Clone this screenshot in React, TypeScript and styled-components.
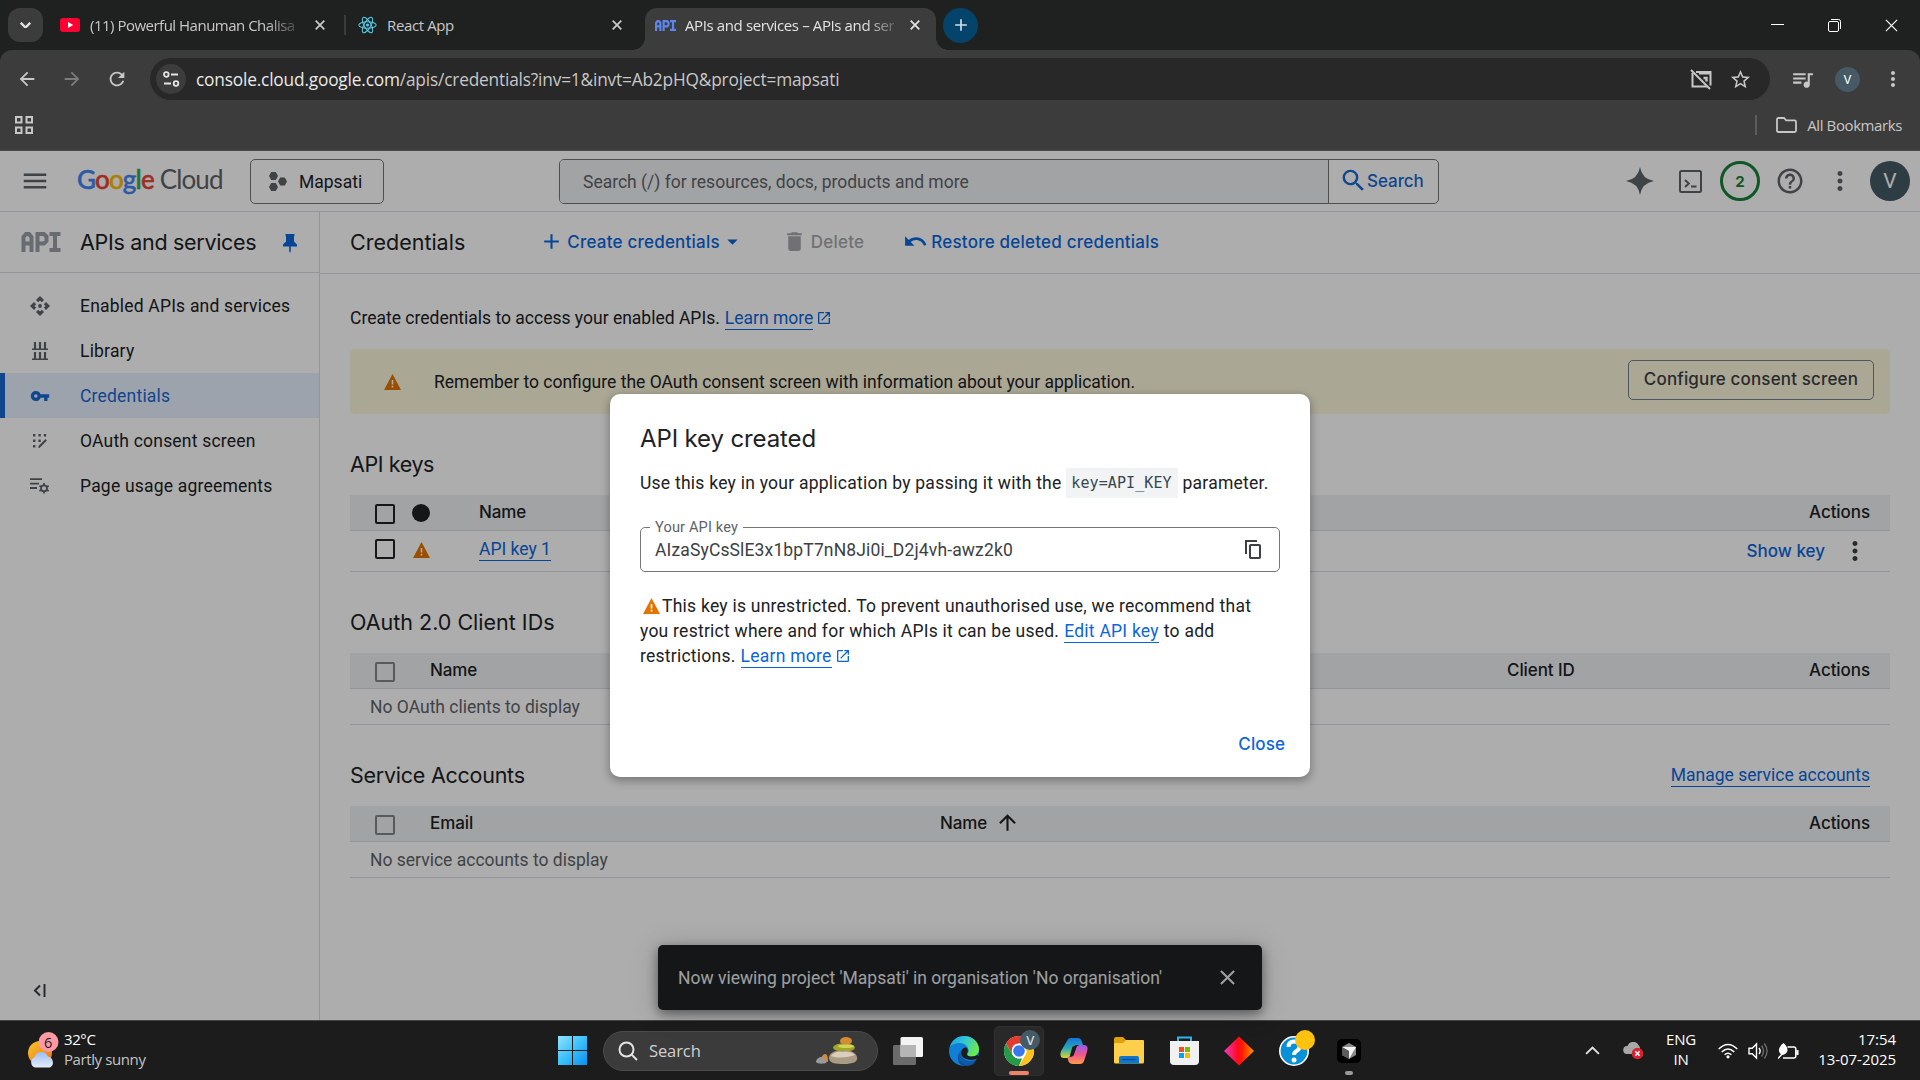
import React from "react";
import styled, { createGlobalStyle } from "styled-components";
import {
  MdMenu,
  MdHelpOutline,
  MdMoreVert,
  MdDelete,
  MdOpenInNew,
  MdArrowUpward,
  MdArrowDropDown,
  MdVpnKey,
  MdSearch,
  MdQueueMusic,
  MdStarBorder,
  MdClose,
  MdArrowBack,
  MdArrowForward,
  MdRefresh,
  MdAdd,
  MdUndo,
} from "react-icons/md";

const roboto = 'Roboto, "Liberation Sans", sans-serif';
const product = 'Inter, Roboto, sans-serif';
const segoe = '"Open Sans", "Noto Sans", sans-serif';
const blue = "#0b66de";

const Global = createGlobalStyle`
  * { box-sizing: border-box; }
  body { margin: 0; overflow: hidden; background: #1c1c1c; }
  button { font: inherit; background: none; border: 0; padding: 0; margin: 0; }
  svg { display: block; flex: none; }
`;

const Screen = styled.div`
  width: 1920px;
  height: 1080px;
  display: flex;
  flex-direction: column;
  overflow: hidden;
  font-family: ${roboto};
  font-size: 17.5px;
  white-space: nowrap;
`;

/* ---------- browser frame ---------- */

const TabStrip = styled.div`
  height: 50px;
  background: #1f2120;
  display: flex;
  align-items: center;
  font-family: ${segoe};
  font-size: 15px;
  letter-spacing: -0.38px;
  color: #c8c8c8;
`;

const TabSearch = styled.button`
  width: 35px;
  height: 34px;
  margin-left: 8px;
  border-radius: 12px;
  background: #3c3c3c;
  display: grid;
  place-items: center;
`;

const Tab = styled.div<{ $w: number; $active?: boolean; $pl: number; $pr: number }>`
  position: relative;
  width: ${(p) => p.$w}px;
  height: 42px;
  align-self: flex-end;
  padding: 0 ${(p) => p.$pr}px 8px ${(p) => p.$pl}px;
  display: flex;
  align-items: center;
  border-radius: 12px 12px 0 0;
  background: ${(p) => (p.$active ? "#3c3c3c" : "transparent")};
  color: ${(p) => (p.$active ? "#e3e3e3" : "#c8c8c8")};
  ${(p) =>
    p.$active &&
    `
    &::before, &::after {
      content: "";
      position: absolute;
      bottom: 0;
      width: 12px;
      height: 12px;
    }
    &::before { left: -12px; background: radial-gradient(circle at 0 0, transparent 11.5px, #3c3c3c 12px); }
    &::after { right: -12px; background: radial-gradient(circle at 100% 0, transparent 11.5px, #3c3c3c 12px); }
  `}
`;

const TabTitle = styled.span<{ $fade?: boolean; $ml: number; $ls?: number }>`
  margin-left: ${(p) => p.$ml}px;
  letter-spacing: ${(p) => p.$ls ?? -0.38}px;
  ${(p) => p.$fade && "mask-image: linear-gradient(90deg, #000 86%, rgba(0,0,0,.25));"}
`;

const Push = styled.div`
  flex: 1;
`;

const VRule = styled.i<{ $ml?: number }>`
  width: 2px;
  height: 20px;
  margin-left: ${(p) => p.$ml ?? 0}px;
  background: ${(p) => (p.$ml ? "#5c5c5c" : "#3c3c3c")};
`;

const NewTab = styled.button`
  width: 35px;
  height: 35px;
  margin-left: 7px;
  border-radius: 50%;
  background: #04446a;
  color: #d5dde2;
  display: grid;
  place-items: center;
`;

const WindowControls = styled.div`
  display: flex;
  align-items: center;
  gap: 44px;
  margin-right: 22px;
`;

const Chrome = styled.div`
  height: 101px;
  background: #1f2120;
`;

const ChromeBody = styled.div`
  height: 101px;
  border-radius: 12px 12px 0 0;
  background: #3c3c3c;
  border-bottom: 1px solid #4a4a4a;
`;

const Toolbar = styled.div`
  height: 58px;
  display: flex;
  align-items: center;
  color: #c7c7c7;
  padding-left: 16px;
`;

const NavIcon = styled.span<{ $dim?: boolean; $mr: number }>`
  margin-right: ${(p) => p.$mr}px;
  color: ${(p) => (p.$dim ? "#7c7c7c" : "#c7c7c7")};
`;

const Omnibox = styled.div`
  width: 1620px;
  height: 42px;
  border-radius: 21px;
  background: #282828;
  display: flex;
  align-items: center;
  padding: 0 18px 0 6px;
  font-family: ${segoe};
  font-size: 17.3px;
  color: #c7c7c7;
`;

const SiteInfo = styled.span`
  width: 30px;
  height: 30px;
  border-radius: 50%;
  background: #3c3c3c;
  display: grid;
  place-items: center;
  margin-right: 10px;
`;

const Url = styled.span`
  flex: 1;
  letter-spacing: -0.18px;
  b {
    font-weight: 400;
    color: #e8e8e8;
  }
`;

const Avatar = styled.span<{ $d: number; $bg: string; $fs: number }>`
  width: ${(p) => p.$d}px;
  height: ${(p) => p.$d}px;
  border-radius: 50%;
  background: ${(p) => p.$bg};
  color: #fff;
  font-family: ${roboto};
  font-size: ${(p) => p.$fs}px;
  display: grid;
  place-items: center;
  flex: none;
`;

const Bookmarks = styled.div`
  height: 42px;
  padding: 2px 18px 10px 15px;
  display: flex;
  align-items: center;
  font-family: ${segoe};
  font-size: 15px;
  letter-spacing: -0.4px;
  color: #c7c7c7;
`;

const FolderLabel = styled.span`
  margin-left: 10px;
  padding-bottom: 1px;
`;

/* ---------- console page ---------- */

const Page = styled.div`
  position: relative;
  height: 869px;
  background: #fff;
  color: #202124;
  display: flex;
  flex-direction: column;
`;

const Header = styled.header`
  height: 61px;
  border-bottom: 1px solid #dadce0;
  display: flex;
  align-items: center;
  padding-left: 20px;
  color: #5f6368;
`;

const Logo = styled.span`
  margin-left: 27px;
  width: 147px;
  font-family: Lato, ${product};
  font-size: 26px;
  letter-spacing: -0.85px;
  color: #5f6368;
  padding-bottom: 4px;
`;

const Letter = styled.span<{ $c: string }>`
  color: ${(p) => p.$c};
  font-weight: 500;
  -webkit-text-stroke: 0.5px ${(p) => p.$c};
`;

const ProjectPicker = styled.button`
  width: 134px;
  height: 45px;
  margin-left: 26px;
  border: 1px solid #747775;
  border-radius: 5px;
  display: flex;
  align-items: center;
  gap: 12px;
  padding: 1px 0 0 18px;
  color: #202124;
`;

const SearchBox = styled.div`
  width: 880px;
  height: 45px;
  margin-left: 175px;
  border: 1px solid #747775;
  border-radius: 5px;
  display: flex;
  overflow: hidden;
`;

const SearchInput = styled.div`
  width: 769px;
  background: #eff1f3;
  border-right: 1px solid #747775;
  padding: 1px 0 0 23px;
  display: flex;
  align-items: center;
  color: #5f6368;
`;

const SearchButton = styled.button`
  flex: 1;
  display: flex;
  align-items: center;
  padding: 0 0 1px 10px;
  color: #1967d2;
  font-family: ${product};
  font-weight: 500;
  font-size: 17px;
  letter-spacing: -0.05px;
`;

const SearchLabel = styled.span`
  margin-left: -1px;
`;

const HeaderTools = styled.div`
  flex: 1;
  display: flex;
  align-items: center;
  justify-content: flex-end;
  padding-right: 10px;
`;

const Tool = styled.span<{ $w: number }>`
  width: ${(p) => p.$w}px;
  display: grid;
  place-items: center;
`;

const Notice = styled.span`
  width: 40px;
  height: 40px;
  border: 3px solid #188038;
  border-radius: 50%;
  color: #188038;
  font-family: ${product};
  font-size: 15px;
  font-weight: 700;
  display: grid;
  place-items: center;
`;

const Columns = styled.div`
  flex: 1;
  display: flex;
`;

const Sidebar = styled.aside`
  width: 320px;
  border-right: 1px solid #dadce0;
  display: flex;
  flex-direction: column;
`;

const SideHead = styled.div`
  height: 61px;
  border-bottom: 1px solid #dadce0;
  display: flex;
  align-items: center;
  padding: 0 22px 0 21px;
`;

const Title = styled.h1<{ $ls?: number; $fs?: number }>`
  margin: 0;
  font-family: ${product};
  font-weight: 400;
  font-size: ${(p) => p.$fs ?? 21.5}px;
  line-height: 28px;
  letter-spacing: ${(p) => p.$ls ?? 0}px;
`;

const SideTitle = styled(Title)`
  flex: 1;
  margin-left: 19px;
`;

const NavList = styled.nav`
  flex: 1;
  padding-top: 10px;
`;

const NavItem = styled.div<{ $active?: boolean }>`
  height: 45px;
  display: flex;
  align-items: center;
  padding-left: ${(p) => (p.$active ? 25 : 30)}px;
  border-left: ${(p) => (p.$active ? "5px solid #1967d2" : "0")};
  background: ${(p) => (p.$active ? "#e8f0fe" : "none")};
  color: ${(p) => (p.$active ? "#1967d2" : "#202124")};
  letter-spacing: 0.2px;
`;

const NavGlyph = styled.span<{ $active?: boolean }>`
  width: 20px;
  margin-right: 30px;
  display: grid;
  place-items: center;
  color: ${(p) => (p.$active ? "#1967d2" : "#5f6368")};
`;

const Collapse = styled.button`
  width: 14px;
  margin: 0 0 23px 33px;
`;

const Main = styled.main`
  flex: 1;
`;

const ActionBar = styled.div`
  height: 62px;
  border-bottom: 1px solid #dadce0;
  display: flex;
  align-items: center;
  padding: 0 0 2px 30px;
`;

const ActionButton = styled.button<{ $ml: number; $off?: boolean }>`
  margin-left: ${(p) => p.$ml}px;
  display: flex;
  align-items: center;
  color: ${(p) => (p.$off ? "#a5a7a9" : blue)};
  font-family: ${product};
  font-size: 17px;
  font-weight: 500;
  letter-spacing: 0.22px;
`;

const Gap = styled.i<{ $w: number }>`
  width: ${(p) => p.$w}px;
  flex: none;
`;

const Content = styled.div`
  padding: 30px 30px 0;
`;

const Intro = styled.p`
  margin: 0 0 18px;
  height: 27px;
  display: flex;
  align-items: center;
`;

const Link = styled.a<{ $ml?: number; $mb?: number }>`
  color: ${blue};
  border-bottom: 1.5px solid ${blue};
  line-height: 20px;
  height: 22px;
  margin: 2px 0 ${(p) => p.$mb ?? 0}px ${(p) => p.$ml ?? 0}px;
`;

const Banner = styled.div`
  height: 65px;
  border-radius: 5px;
  background: #fbf6dc;
  display: flex;
  align-items: center;
  padding: 0 16px 0 34px;
`;

const BannerText = styled.span`
  flex: 1;
  margin-left: 33px;
`;

const OutlineButton = styled.button`
  width: 246px;
  height: 40px;
  margin-bottom: 3px;
  padding-bottom: 2px;
  border: 1px solid #747f8d;
  border-radius: 5px;
  font-family: ${product};
  font-weight: 500;
  font-size: 17px;
  letter-spacing: 0.15px;
  color: #3c4043;
`;

const SectionHead = styled.div`
  height: 81px;
  padding: 0 20px 17px 0;
  display: flex;
  align-items: flex-end;
  justify-content: space-between;
`;

const HeadRow = styled.div`
  height: 36px;
  background: #eff1f3;
  border-bottom: 1px solid #dadce0;
  display: flex;
  align-items: center;
  padding: 0 20px 2px 25px;
  font-family: ${product};
  font-weight: 500;
  font-size: 17px;
  letter-spacing: -0.08px;
`;

const Row = styled.div<{ $h: number }>`
  height: ${(p) => p.$h}px;
  border-bottom: 1px solid #dadce0;
  display: flex;
  align-items: center;
  padding: 0 20px 4px 25px;
`;

const EmptyRow = styled(Row)`
  padding: 0 0 0 20px;
  color: #5f6368;
`;

const Check = styled.span<{ $soft?: boolean }>`
  width: 20px;
  height: 20px;
  border: 2px solid ${(p) => (p.$soft ? "#80868b" : "#202124")};
  border-radius: 2px;
`;

const Cell = styled.span<{ $w?: number; $pt?: number }>`
  ${(p) => (p.$w ? `width: ${p.$w}px;` : "flex: 1;")}
  padding-top: ${(p) => p.$pt ?? 0}px;
  display: flex;
  align-items: center;
`;

const Dot = styled.i`
  width: 18px;
  height: 18px;
  border-radius: 50%;
  background: #202124;
`;

const ShowKey = styled.span`
  font-family: ${product};
  font-weight: 500;
  font-size: 17px;
  color: ${blue};
  margin-right: 15px;
  padding-top: 4px;
`;

/* ---------- overlays ---------- */

const Toast = styled.div`
  position: absolute;
  left: 658px;
  top: 794px;
  width: 604px;
  height: 65px;
  border-radius: 5px;
  background: #202124;
  color: #e8eaed;
  display: flex;
  align-items: center;
  justify-content: space-between;
  padding: 0 22px 0 20px;
  box-shadow: 0 4px 12px rgba(0, 0, 0, 0.45), 0 2px 30px rgba(0, 0, 0, 0.15);
`;

const Scrim = styled.div`
  position: absolute;
  inset: 0;
  background: rgba(0, 0, 0, 0.32);
`;

const Dialog = styled.section`
  position: absolute;
  left: 610px;
  top: 243px;
  width: 700px;
  height: 383px;
  padding: 31px 25px 0 30px;
  border-radius: 10px;
  background: #fff;
  display: flex;
  flex-direction: column;
  letter-spacing: 0.245px;
  box-shadow: 0 3px 8px 1px rgba(0, 0, 0, 0.3);
`;

const DialogText = styled.p`
  margin: 15px 0 0;
  height: 30px;
  display: flex;
  align-items: center;
`;

const Code = styled.code`
  width: 112px;
  height: 30px;
  margin: 0 5px 0 4px;
  background: #f1f3f4;
  display: grid;
  place-items: center;
  font-family: "DejaVu Sans Mono", monospace;
  font-size: 15px;
  letter-spacing: 0.1px;
  color: #37474f;
`;

const Field = styled.div`
  position: relative;
  width: 640px;
  height: 45px;
  margin-top: 29px;
  border: 1px solid #747775;
  border-radius: 5px;
  padding: 0 18px 0 14px;
  display: flex;
  align-items: center;
  justify-content: space-between;
  color: #3c4043;
  letter-spacing: 0.14px;
`;

const FieldLabel = styled.span`
  position: absolute;
  left: 9px;
  top: -11px;
  padding: 0 5px;
  background: #fff;
  font-size: 14.6px;
  line-height: 20px;
  color: #5f6368;
`;

const Warning = styled.div`
  margin-top: 21px;
`;

const WarningLine = styled.div`
  height: 25px;
  display: flex;
  align-items: center;
`;

const DialogClose = styled.button`
  align-self: flex-end;
  margin-top: 64px;
  height: 24px;
  font-family: ${product};
  font-weight: 500;
  font-size: 17px;
  letter-spacing: 0.1px;
  color: ${blue};
`;

/* ---------- taskbar ---------- */

const Taskbar = styled.footer`
  height: 60px;
  background: #1c1c1c;
  border-top: 1px solid #434545;
  display: flex;
  align-items: center;
  font-family: ${segoe};
  font-size: 15px;
  letter-spacing: -0.4px;
  line-height: 20px;
  color: #fff;
`;

const Weather = styled.div`
  width: 558px;
  padding-left: 27px;
  display: flex;
  gap: 5px;
  align-items: center;
`;

const WeatherText = styled.div`
  padding-bottom: 4px;
`;

const Muted = styled.div`
  color: #c4c4c4;
`;

const SearchPill = styled.div`
  width: 275px;
  height: 40px;
  margin: 0 15px 0 16px;
  border-radius: 20px;
  background: #3b3b3b;
  border: 1px solid #4b4b4b;
  display: flex;
  align-items: center;
  padding: 0 19px 0 14px;
  font-size: 16.5px;
  letter-spacing: -0.1px;
  color: #d0d0d0;
`;

const PillText = styled.span`
  flex: 1;
  margin-left: 11px;
`;

const AppSlot = styled.span<{ $active?: boolean; $mark?: string }>`
  position: relative;
  width: 50px;
  height: 50px;
  margin-right: 5px;
  border-radius: 5px;
  display: grid;
  place-items: center;
  background: ${(p) => (p.$active ? "#292929" : "none")};
  border: 1px solid ${(p) => (p.$active ? "#303030" : "transparent")};
  ${(p) =>
    p.$mark &&
    `&::after {
      content: "";
      position: absolute;
      bottom: 0;
      left: ${p.$active ? 14 : 20}px;
      width: ${p.$active ? 20 : 8}px;
      height: 4px;
      border-radius: 2px;
      background: ${p.$mark};
    }`}
`;

const Tray = styled.div`
  flex: 1;
  display: flex;
  align-items: center;
  justify-content: flex-end;
  padding-right: 24px;
`;

const TrayText = styled.div<{ $align: string; $w: number; $ls?: number }>`
  width: ${(p) => p.$w}px;
  text-align: ${(p) => p.$align};
  letter-spacing: ${(p) => p.$ls ?? -0.2}px;
  padding-bottom: 4px;
`;

/* ---------- drawings ---------- */

const CloseX = ({ s = 10, w = 1.8, c = "currentColor" }) => (
  <svg width={s} height={s} viewBox="0 0 10 10">
    <path d="M.7.7l8.6 8.6M9.3.7L.7 9.3" stroke={c} strokeWidth={(w * 10) / s} fill="none" />
  </svg>
);

const Warn = ({ w = 17, h = 16 }) => (
  <svg width={w} height={h} viewBox="0 0 17 16">
    <path d="M8.5 0L17 16H0z" fill="#e37400" />
    <path d="M8.5 6v4.4M8.5 11.8v1.8" stroke="#fff" strokeWidth="1.6" />
  </svg>
);

const YouTube = () => (
  <svg width="20" height="14" viewBox="0 0 20 14">
    <rect width="20" height="14" rx="3" fill="#ff0033" />
    <path d="M8 4l5.2 3L8 10z" fill="#fff" />
  </svg>
);

const ReactMark = () => (
  <svg width="19" height="18" viewBox="-12 -11 24 22" fill="none" stroke="#5ac8e4" strokeWidth="1.3">
    <circle r="2" fill="#5ac8e4" stroke="none" />
    <ellipse rx="11" ry="4.2" />
    <ellipse rx="11" ry="4.2" transform="rotate(60)" />
    <ellipse rx="11" ry="4.2" transform="rotate(120)" />
  </svg>
);

const ApiMark = ({ w, h, c }: { w: number; h: number; c: string }) => (
  <svg width={w} height={h} viewBox="0 0 39 20" fill="none" stroke={c} strokeWidth="4">
    <path d="M2 20V5l2.500-3h3L10 5v15M2 11.500h8M16 20V2h6.500l2.500 2.500v4.500l-2.500 2.500H16M28 2h11M28 18h11M33.500 2v16" />
  </svg>
);

const Tune = () => (
  <svg width="17" height="16" viewBox="0 0 17 16" fill="none" stroke="#e3e3e3" strokeWidth="1.8">
    <circle cx="3.300" cy="3.500" r="2.300" />
    <path d="M8 3.500h7M1 12.500h7" />
    <circle cx="13" cy="12.500" r="2.300" />
  </svg>
);

const TabOff = () => (
  <svg width="22" height="21" viewBox="0 0 22 21" fill="none" stroke="#c7c7c7" strokeWidth="2">
    <path d="M2.500 4v13.500H17M6 3h14.500v13.500" />
    <path d="M9 4.300h11.500M13.500 9h3v3.500" strokeWidth="2.400" />
    <path d="M1 1l19 19" />
  </svg>
);

const Apps = () => (
  <svg width="18" height="18" viewBox="0 0 18 18" fill="none" stroke="#c7c7c7" strokeWidth="2">
    <path d="M1 1h5.500v5.500H1zM11.500 1H17v5.500h-5.500zM1 11.500h5.500V17H1zM11.500 11.500H17V17h-5.500z" />
  </svg>
);

const Folder = () => (
  <svg width="21" height="16" viewBox="0 0 21 16" fill="none" stroke="#c7c7c7" strokeWidth="1.800">
    <path d="M1 13.500v-11Q1 1 2.500 1H8l2.200 2.300h8.300q1.500 0 1.500 1.500v8.700q0 1.500-1.500 1.500h-16Q1 15 1 13.500z" />
  </svg>
);

const Hexes = () => (
  <svg width="18" height="19" viewBox="0 0 18 19" fill="#5f6368">
    <path d="M2.200 0h4.600L9 4 6.800 8H2.200L0 4zM2.200 11h4.600L9 15l-2.200 4H2.200L0 15zM11.200 5.500h4.600l2.200 4-2.200 4h-4.600L9 9.500z" />
  </svg>
);

const Sparkle = () => (
  <svg width="28" height="28" viewBox="0 0 28 28" fill="#5f6368">
    <path d="M14 0q2 12 14 14-12 2-14 14Q12 16 0 14 12 12 14 0z" />
  </svg>
);

const Terminal = () => (
  <svg width="23" height="23" viewBox="0 0 23 23" fill="none" stroke="#5f6368" strokeWidth="2">
    <rect x="1" y="1" width="21" height="21" rx="1.500" />
    <path d="M6 10l3.800 3.500L6 17M12 16.500h5.500" />
  </svg>
);

const Pin = () => (
  <svg width="14" height="19" viewBox="0 0 14 19" fill={blue}>
    <path d="M2.500 0h9v1.500L11 2v5.500l3 3V12.500H7.800V17L7 19l-.8-2v-4.500H0v-2l3-3V2l-.5-.5z" />
  </svg>
);

const PinSlot = styled.span`
  padding-top: 3px;
`;

const Copy = () => (
  <svg width="16" height="19" viewBox="0 0 16 19" fill="none" stroke="#3c4043" strokeWidth="2">
    <path d="M1 14V1h11" />
    <rect x="5" y="5" width="10" height="13" rx=".8" />
  </svg>
);

const ApiNav = () => (
  <svg width="20" height="20" viewBox="0 0 20 20" fill="currentColor">
    <circle cx="10" cy="10" r="1.900" />
    <path d="M10 0l4 4-2.200 2.200L10 4.500 8.200 6.200 6 4zM10 20l4-4-2.200-2.200L10 15.500l-1.800-1.700L6 16zM0 10l4-4 2.200 2.200L4.500 10l1.700 1.800L4 14zM20 10l-4-4-2.200 2.200 1.700 1.800-1.700 1.800L16 14z" />
  </svg>
);

const Library = () => (
  <svg width="16" height="18" viewBox="0 0 16 18" fill="none" stroke="currentColor">
    <path d="M3 0v7M8 0v7M13 0v7M3 10v7M8 10v7M13 10v7" strokeWidth="2.200" />
    <path d="M0 7.300h16M0 17.300h16" strokeWidth="1.400" />
  </svg>
);

const Consent = () => (
  <svg width="14" height="14" viewBox="0 0 14 14" fill="currentColor">
    <path d="M0 0h2.400v2.400H0zM5.400 0h2.400v2.400H5.400zM10.800 0h2.400v2.400h-2.400zM0 5.500h2.400v2.400H0zM5.400 5.500h2.400v2.400H5.400zM0 11h2.400v2.400H0zM5.500 12l7-7 1.400 1.400L6.500 14h-1z" />
  </svg>
);

const Agreements = () => (
  <svg width="20" height="16" viewBox="0 0 20 16" fill="none" stroke="currentColor" strokeWidth="1.800">
    <path d="M0 1.200h12M0 5.600h9M0 10h7" />
    <circle cx="14" cy="10.300" r="3" />
    <path d="M14 5v2M14 13.600v2M9.400 7.700l1.700 1M17 12l1.700 1M9.400 13l1.700-1M17 8.700l1.700-1" />
  </svg>
);

const CollapseMark = () => (
  <svg width="13" height="13" viewBox="0 0 13 13" fill="none" stroke="#3c4043" strokeWidth="2">
    <path d="M7 1.500L2 6.500l5 5M11.500 0v13" />
  </svg>
);

const WeatherIcon = () => (
  <svg width="32" height="38" viewBox="0 0 32 38">
    <defs>
      <linearGradient id="sun" x1="0" y1="0" x2="1" y2="1">
        <stop offset="0" stopColor="#f8c62c" />
        <stop offset="1" stopColor="#ef6c12" />
      </linearGradient>
      <linearGradient id="cloud" x1="0" y1="0" x2="0" y2="1">
        <stop offset="0" stopColor="#9dbcf3" />
        <stop offset="1" stopColor="#e4eefc" />
      </linearGradient>
    </defs>
    <circle cx="13" cy="21" r="12" fill="url(#sun)" />
    <path d="M8 35.500a5.500 5.500 0 01-.5-10.300 7 7 0 0113.300-.8A6 6 0 0123 35.500z" fill="url(#cloud)" />
    <circle cx="21.500" cy="10" r="10" fill="#ff99a4" />
    <text x="21" y="15.500" textAnchor="middle" fontSize="14.500" fill="#1c1c1c">
      6
    </text>
  </svg>
);

const StartIcon = () => (
  <svg width="29" height="29" viewBox="0 0 29 29">
    <defs>
      <linearGradient id="win" x1="0" y1="0" x2="1" y2="1">
        <stop offset="0" stopColor="#8fe3ff" />
        <stop offset=".5" stopColor="#3cc1fb" />
        <stop offset="1" stopColor="#0a8fee" />
      </linearGradient>
    </defs>
    <path d="M0 0h14v14H0zM15 0h14v14H15zM0 15h14v14H0zM15 15h14v14H15z" fill="url(#win)" />
  </svg>
);

const Stones = () => (
  <svg width="42" height="27" viewBox="0 0 42 27">
    <ellipse cx="30" cy="4" rx="6" ry="4" fill="#d98a35" />
    <ellipse cx="28" cy="10.500" rx="11" ry="4.300" fill="#a3a526" />
    <ellipse cx="30" cy="9.300" rx="8" ry="1.800" fill="#d2d55c" />
    <path d="M13 21c0-5 6-8 12-7 4-1 14-1 16 6 1 5-4 7-13 7s-15-1-15-6z" fill="#a99b84" />
    <path d="M15 19c2-3 6-5 11-4 5-1 11 0 13 3-6 2-16 4-24 1z" fill="#d9cfba" />
    <path d="M4 24c1-4 3-7 5-7 3 0 3 5 3 8z" fill="#d48a3c" />
    <path d="M0 25c0-3 3-5 6-5 3 1 5 4 4 6-2 1-9 1-10-1z" fill="#9a9a9a" />
  </svg>
);

const TaskView = () => (
  <svg width="30" height="28" viewBox="0 0 30 28">
    <rect y="8" width="23" height="20" rx="1.500" fill="#6b6b6b" />
    <rect x="7.500" width="22.500" height="20" rx="1.500" fill="#f4f4f4" />
    <path d="M7.500 8H23v12H9q-1.500 0-1.500-1.500z" fill="#b5b5b5" />
  </svg>
);

const Edge = () => (
  <svg width="30" height="30" viewBox="0 0 30 30">
    <defs>
      <linearGradient id="edgeTop" x1="0" y1="0" x2="1" y2=".5">
        <stop offset="0" stopColor="#1b9de2" />
        <stop offset=".5" stopColor="#33c6d6" />
        <stop offset="1" stopColor="#6bea4e" />
      </linearGradient>
    </defs>
    <circle cx="15" cy="15" r="15" fill="#0f7fd8" />
    <path d="M1 10.500C3 4 9 0 15 0c9 0 15 6.500 15 13 0 5-3.500 7.500-7 7.500-4 0-5-1.500-4.500-3 1-1.200 1.500-2 1-4C18.500 9 14.500 7 10.500 7 6 7 2.500 9 1 10.500z" fill="url(#edgeTop)" />
    <path d="M10 17c-1 6 5 11 11 11 2.500 0 4.500-1 6-2-1 2-6 4-10 4-7 0-10-6-7-13z" fill="#0c4d94" />
    <path d="M12 14c-2 6 3 11 9 11 3 0 5.500-1 6.500-2-2 5-6 6-9 6-7 0-12-8-6.500-15z" fill="#0f5aa6" />
    <path d="M12 17c0-3 2-5.500 5-5.500 2 1 2.500 4 1 6-.5 1.500.5 3 4.500 3 3 0 5-1 6-2l1 3.500-4 1.500c-7 1-13-1-13.500-6.500z" fill="#1c1c1c" />
  </svg>
);

const ChromeIcon = () => (
  <svg width="48" height="48" viewBox="-8 -3 48 48">
    <circle cx="16" cy="21" r="15" fill="#fff" />
    <path d="M3 13.500A15 15 0 0129 13.500H16a7.500 7.500 0 00-6.500 3.750L9.500 24.750z" fill="#e33b2e" />
    <path d="M3 13.500L9.500 24.750A7.500 7.500 0 0016 28.500h3L16 36A15 15 0 013 13.500z" fill="#259b48" />
    <path d="M29 13.500A15 15 0 0116 36l6.500-11.250A7.500 7.500 0 0022.500 17.250L16 13.500z" fill="#fcc31e" />
    <circle cx="16" cy="21" r="7.300" fill="#fff" />
    <circle cx="16" cy="21" r="5.800" fill="#3778ec" />
    <circle cx="27" cy="10" r="10" fill="#455a64" />
    <text x="27" y="14.500" textAnchor="middle" fontSize="13" fontWeight="600" fill="#cfd8dc">
      V
    </text>
  </svg>
);

const Copilot = () => (
  <svg width="28" height="26" viewBox="0 0 28 26">
    <defs>
      <linearGradient id="cpA" x1="0" y1="0" x2="0" y2="1">
        <stop offset="0" stopColor="#1673dd" />
        <stop offset=".5" stopColor="#2aa8b8" />
        <stop offset="1" stopColor="#dcd62c" />
      </linearGradient>
      <linearGradient id="cpB" x1="0" y1="0" x2="0" y2="1">
        <stop offset="0" stopColor="#9a5cf0" />
        <stop offset=".5" stopColor="#f0558e" />
        <stop offset="1" stopColor="#ff9c4a" />
      </linearGradient>
    </defs>
    <path d="M7 3q1-3 4-3h7q3 0 4 4l1 3h-6q-3 0-4 3l-3 8q-1 2-3 2H4q-5 0-3-7z" fill="url(#cpA)" />
    <path d="M20 7h4q5 0 3 7l-3 9q-1 3-4 3h-7q-4 0-5-4l-.5-3H10q3 0 4-3l2.500-7q1-2 3.500-2z" fill="url(#cpB)" />
    <path d="M12.500 8.500h4l-3 9H10z" fill="#1c1c1c" />
  </svg>
);

const Explorer = () => (
  <svg width="30" height="27" viewBox="0 0 30 27">
    <path d="M0 2q0-2 2-2h7l3 3h16v8H0z" fill="#dca10c" />
    <path d="M0 7q0-1 1-1h8l3-3h17q1 0 1 1v21q0 1.500-1.500 1.500h-27Q0 26.500 0 25z" fill="#fdcf4b" />
    <path d="M5 26.500V21q0-2 2-2h16q2 0 2 2v5.500z" fill="#1177cc" />
    <path d="M8.500 22.500h13" stroke="#0a4f90" strokeWidth="1.300" />
  </svg>
);

const Store = () => (
  <svg width="29" height="30" viewBox="0 0 29 30">
    <path d="M8 6V1.500h13V6" fill="none" stroke="#2fb5ee" strokeWidth="2" />
    <path d="M0 5h29v20q0 4-4 4H4q-4 0-4-4z" fill="#f1f1f1" />
    <path d="M9 11h5v5H9z" fill="#f25022" />
    <path d="M15 11h5v5h-5z" fill="#7fba00" />
    <path d="M9 17h5v5H9z" fill="#00a4ef" />
    <path d="M15 17h5v5h-5z" fill="#ffb900" />
  </svg>
);

const Diamond = () => (
  <svg width="30" height="30" viewBox="0 0 30 30">
    <defs>
      <linearGradient id="dia">
        <stop offset="0" stopColor="#f03cc8" />
        <stop offset=".45" stopColor="#ff0a1e" />
        <stop offset=".6" stopColor="#ff1a00" />
        <stop offset="1" stopColor="#ff9a00" />
      </linearGradient>
    </defs>
    <path d="M15 .5L30 15 15 29.500 0 15z" fill="url(#dia)" />
  </svg>
);

const HelpIcon = () => (
  <svg width="48" height="48" viewBox="-6 -3 48 48">
    <circle cx="18" cy="21" r="14.200" fill="#0a90d6" stroke="#fff" strokeWidth="1.600" />
    <path d="M12.500 17q0-5.500 5.500-5.500t5.500 5q0 3-3 4.500-2.500 1.500-2.500 4" fill="none" stroke="#fff" strokeWidth="4" />
    <circle cx="18" cy="30" r="2.500" fill="#fff" />
    <circle cx="29" cy="10" r="10" fill="#ffc20e" />
  </svg>
);

const CursorIcon = () => (
  <svg width="24" height="24" viewBox="0 0 24 24">
    <rect width="24" height="24" rx="5" fill="#000" />
    <path d="M12 4l7 4v8l-7 4-7-4V8z" fill="#8a8a8a" />
    <path d="M5 8h14l-7 12v-8z" fill="#f2f2f2" />
    <path d="M5 8l7 4v8l-7-4z" fill="#5a5a5a" />
  </svg>
);

const TrayCloud = () => (
  <svg width="21" height="18" viewBox="0 0 21 18">
    <path d="M4 12a4 4 0 01.5-8 6 6 0 0111-1q3 3 1 9z" fill="#a8a8a8" />
    <circle cx="14.500" cy="11.500" r="5.800" fill="#d8232f" />
    <path d="M12.300 9.300l4.400 4.400M16.700 9.300l-4.400 4.400" stroke="#fff" strokeWidth="1.500" />
  </svg>
);

const Wifi = () => (
  <svg width="20" height="16" viewBox="0 0 20 16" fill="none" stroke="#fff" strokeWidth="1.500">
    <path d="M.7 6q9.300-9 18.600 0M3.700 9q6.300-6 12.600 0M6.600 11.800q3.400-3.200 6.800 0" />
    <circle cx="10" cy="13.800" r="1.600" fill="#fff" stroke="none" />
  </svg>
);

const Volume = () => (
  <svg width="21" height="18" viewBox="0 0 21 18" fill="none" strokeWidth="1.400" stroke="#fff">
    <path d="M1 6.300h3.200L8.500 2v14L4.200 11.700H1z" />
    <path d="M11 6q2.300 3 0 6" />
    <path d="M13.500 3.500q4 5.500 0 11M16.300 1.500q5.500 7.500 0 15" stroke="#6a6a6a" />
  </svg>
);

const Battery = () => (
  <svg width="21" height="18" viewBox="0 0 21 18" fill="none" stroke="#fff" strokeWidth="1.500">
    <path d="M9.500 5h6.300q2 0 2 2v7q0 2-2 2H5" />
    <path d="M19 8.800h.8v3.400H19z" fill="#fff" />
    <path d="M5.500 1q4 3.500 4 7t-5 5q-4-2-3.500-5.500T5.500 1z" fill="#fff" stroke="none" />
    <path d="M0 16.500L5 11" />
  </svg>
);

const Chevron = ({ up, w, sw }: { up?: boolean; w: number; sw: number }) => (
  <svg width={w} height={w * 0.6} viewBox="0 0 14 8.400" fill="none" stroke="#e3e3e3" strokeWidth={sw}>
    <path d={up ? "M1 7.400l6-6 6 6" : "M1 1l6 6 6-6"} />
  </svg>
);

const GOOGLE: [string, string][] = [
  ["G", "#4285f4"],
  ["o", "#ea4335"],
  ["o", "#fbbc04"],
  ["g", "#4285f4"],
  ["l", "#34a853"],
  ["e", "#ea4335"],
];

const NAV = [
  { label: "Enabled APIs and services", icon: <ApiNav /> },
  { label: "Library", icon: <Library /> },
  { label: "Credentials", icon: <MdVpnKey size={20} />, active: true },
  { label: "OAuth consent screen", icon: <Consent /> },
  { label: "Page usage agreements", icon: <Agreements /> },
];

const BrowserFrame = () => (
  <>
    <TabStrip>
      <TabSearch>
        <Chevron w={11} sw={3} />
      </TabSearch>
      <Tab $w={301} $pl={17} $pr={19}>
        <YouTube />
        <TabTitle $ml={10} $ls={-0.5} $fade>
          (11) Powerful Hanuman Chalisa
        </TabTitle>
        <Push />
        <CloseX />
      </Tab>
      <VRule />
      <Tab $w={299} $pl={12} $pr={23}>
        <ReactMark />
        <TabTitle $ml={10}>React App</TabTitle>
        <Push />
        <CloseX />
      </Tab>
      <Tab $w={291} $pl={10} $pr={16} $active>
        <ApiMark w={21} h={11} c="#5c85ee" />
        <TabTitle $ml={9} $fade>
          APIs and services – APIs and ser
        </TabTitle>
        <Push />
        <CloseX />
      </Tab>
      <NewTab>
        <MdAdd size={20} />
      </NewTab>
      <Push />
      <WindowControls>
        <svg width="13" height="2">
          <path d="M0 .5h13" stroke="#fff" />
        </svg>
        <svg width="13" height="13" fill="none" stroke="#fff">
          <rect x=".5" y="2.500" width="10" height="10" rx="1.500" />
          <path d="M3 .5h7.500q2 0 2 2V10" />
        </svg>
        <CloseX s={13} w={1.2} c="#fff" />
      </WindowControls>
    </TabStrip>
    <Chrome>
      <ChromeBody>
        <Toolbar>
          <NavIcon $mr={23}>
            <MdArrowBack size={22} />
          </NavIcon>
          <NavIcon $dim $mr={23}>
            <MdArrowForward size={22} />
          </NavIcon>
          <NavIcon $mr={22}>
            <MdRefresh size={22} />
          </NavIcon>
          <Omnibox>
            <SiteInfo>
              <Tune />
            </SiteInfo>
            <Url>
              <b>console.cloud.google.com</b>/apis/credentials?inv=1&amp;invt=Ab2pHQ&amp;project=mapsati
            </Url>
            <TabOff />
            <Gap $w={17} />
            <MdStarBorder size={23} />
          </Omnibox>
          <Gap $w={20} />
          <MdQueueMusic size={25} />
          <Gap $w={20} />
          <Avatar $d={25} $bg="#455a64" $fs={12.500}>
            V
          </Avatar>
          <Gap $w={21} />
          <MdMoreVert size={24} />
        </Toolbar>
        <Bookmarks>
          <Apps />
          <Push />
          <VRule $ml={1} />
          <Gap $w={19} />
          <Folder />
          <FolderLabel>All Bookmarks</FolderLabel>
        </Bookmarks>
      </ChromeBody>
    </Chrome>
  </>
);

const App = () => (
  <Screen>
    <Global />
    <BrowserFrame />
    <Page>
      <Header>
        <MdMenu size={30} />
        <Logo>
          {GOOGLE.map(([ch, c], i) => (
            <Letter key={i} $c={c}>
              {ch}
            </Letter>
          ))}{" "}
          Cloud
        </Logo>
        <ProjectPicker>
          <Hexes />
          Mapsati
        </ProjectPicker>
        <SearchBox>
          <SearchInput>Search (/) for resources, docs, products and more</SearchInput>
          <SearchButton>
            <MdSearch size={29} />
            <SearchLabel>Search</SearchLabel>
          </SearchButton>
        </SearchBox>
        <HeaderTools>
          <Tool $w={50}>
            <Sparkle />
          </Tool>
          <Tool $w={50}>
            <Terminal />
          </Tool>
          <Tool $w={50}>
            <Notice>2</Notice>
          </Tool>
          <Tool $w={50}>
            <MdHelpOutline size={30} />
          </Tool>
          <Tool $w={50}>
            <MdMoreVert size={30} />
          </Tool>
          <Gap $w={5} />
          <Avatar $d={40} $bg="#455a64" $fs={21}>
            V
          </Avatar>
        </HeaderTools>
      </Header>
      <Columns>
        <Sidebar>
          <SideHead>
            <ApiMark w={40} h={20} c="#9aa0a6" />
            <SideTitle $ls={-0.3}>APIs and services</SideTitle>
            <PinSlot>
              <Pin />
            </PinSlot>
          </SideHead>
          <NavList>
            {NAV.map((n) => (
              <NavItem key={n.label} $active={n.active}>
                <NavGlyph $active={n.active}>{n.icon}</NavGlyph>
                {n.label}
              </NavItem>
            ))}
          </NavList>
          <Collapse>
            <CollapseMark />
          </Collapse>
        </Sidebar>
        <Main>
          <ActionBar>
            <Title>Credentials</Title>
            <ActionButton $ml={74}>
              <MdAdd size={25} />
              <Gap $w={3} />
              Create credentials
              <MdArrowDropDown size={25} />
            </ActionButton>
            <ActionButton $ml={37} $off>
              <MdDelete size={25} />
              <Gap $w={4} />
              Delete
            </ActionButton>
            <ActionButton $ml={39}>
              <MdUndo size={25} />
              <Gap $w={3} />
              Restore deleted credentials
            </ActionButton>
          </ActionBar>
          <Content>
            <Intro>
              Create credentials to access your enabled APIs.
              <Link $ml={5}>Learn more</Link>
              <Gap $w={3} />
              <MdOpenInNew size={16} color={blue} />
            </Intro>
            <Banner>
              <Warn />
              <BannerText>
                Remember to configure the OAuth consent screen with information about your application.
              </BannerText>
              <OutlineButton>Configure consent screen</OutlineButton>
            </Banner>
            <SectionHead>
              <Title $ls={-0.4}>API keys</Title>
            </SectionHead>
            <HeadRow>
              <Cell $w={37} $pt={4}>
                <Check />
              </Cell>
              <Cell $w={67} $pt={2}>
                <Dot />
              </Cell>
              <Cell>Name</Cell>
              Actions
            </HeadRow>
            <Row $h={41}>
              <Cell $w={38}>
                <Check />
              </Cell>
              <Cell $w={66} $pt={1}>
                <Warn />
              </Cell>
              <Cell>
                <Link>API key 1</Link>
              </Cell>
              <ShowKey>Show key</ShowKey>
              <PinSlot>
                <MdMoreVert size={30} color="#3c4043" />
              </PinSlot>
            </Row>
            <SectionHead>
              <Title>OAuth 2.0 Client IDs</Title>
            </SectionHead>
            <HeadRow>
              <Cell $w={55} $pt={4}>
                <Check $soft />
              </Cell>
              <Cell $w={1077}>Name</Cell>
              <Cell>Client ID</Cell>
              Actions
            </HeadRow>
            <EmptyRow $h={36}>No OAuth clients to display</EmptyRow>
            <SectionHead>
              <Title $ls={-0.25}>Service Accounts</Title>
              <Link $mb={2}>Manage service accounts</Link>
            </SectionHead>
            <HeadRow>
              <Cell $w={55} $pt={4}>
                <Check $soft />
              </Cell>
              <Cell $w={510}>Email</Cell>
              <Cell>
                Name
                <Gap $w={8} />
                <MdArrowUpward size={25} />
              </Cell>
              Actions
            </HeadRow>
            <EmptyRow $h={36}>No service accounts to display</EmptyRow>
          </Content>
        </Main>
      </Columns>
      <Toast>
        Now viewing project 'Mapsati' in organisation 'No organisation'
        <MdClose size={25} />
      </Toast>
      <Scrim />
      <Dialog role="dialog">
        <Title $fs={24} $ls={-0.12}>
          API key created
        </Title>
        <DialogText>
          Use this key in your application by passing it with the
          <Code>key=API_KEY</Code>
          parameter.
        </DialogText>
        <Field>
          <FieldLabel>Your API key</FieldLabel>
          AIzaSyCsSlE3x1bpT7nN8Ji0i_D2j4vh-awz2k0
          <Copy />
        </Field>
        <Warning>
          <WarningLine>
            <Gap $w={3} />
            <Warn />
            <Gap $w={2} />
            This key is unrestricted. To prevent unauthorised use, we recommend that
          </WarningLine>
          <WarningLine>
            you restrict where and for which APIs it can be used.
            <Link $ml={5}>Edit API key</Link>
            <Gap $w={5} />
            to add
          </WarningLine>
          <WarningLine>
            restrictions.
            <Link $ml={5}>Learn more</Link>
            <Gap $w={3} />
            <MdOpenInNew size={16} color={blue} />
          </WarningLine>
        </Warning>
        <DialogClose>Close</DialogClose>
      </Dialog>
    </Page>
    <Taskbar>
      <Weather>
        <WeatherIcon />
        <WeatherText>
          32°C
          <Muted>Partly sunny</Muted>
        </WeatherText>
      </Weather>
      <StartIcon />
      <SearchPill>
        <svg width="20" height="20" viewBox="0 0 20 20" fill="none" stroke="#e3e3e3" strokeWidth="2">
          <circle cx="8.500" cy="8.500" r="7" />
          <path d="M13.500 13.500L19 19" />
        </svg>
        <PillText>Search</PillText>
        <Stones />
      </SearchPill>
      <TaskView />
      <Gap $w={16} />
      <AppSlot>
        <Edge />
      </AppSlot>
      <AppSlot $active $mark="#f0816a">
        <ChromeIcon />
      </AppSlot>
      <AppSlot>
        <Copilot />
      </AppSlot>
      <AppSlot>
        <Explorer />
      </AppSlot>
      <AppSlot>
        <Store />
      </AppSlot>
      <AppSlot>
        <Diamond />
      </AppSlot>
      <AppSlot>
        <HelpIcon />
      </AppSlot>
      <AppSlot $mark="#9a9a9a">
        <CursorIcon />
      </AppSlot>
      <Tray>
        <Chevron up w={15} sw={1.800} />
        <Gap $w={23} />
        <TrayCloud />
        <Gap $w={15} />
        <TrayText $align="center" $w={44}>
          ENG
          <br />
          IN
        </TrayText>
        <Gap $w={15} />
        <Wifi />
        <Gap $w={10} />
        <Volume />
        <Gap $w={9} />
        <Battery />
        <TrayText $align="right" $w={97} $ls={-0.05}>
          17:54
          <br />
          13-07-2025
        </TrayText>
      </Tray>
    </Taskbar>
  </Screen>
);

export default App;
